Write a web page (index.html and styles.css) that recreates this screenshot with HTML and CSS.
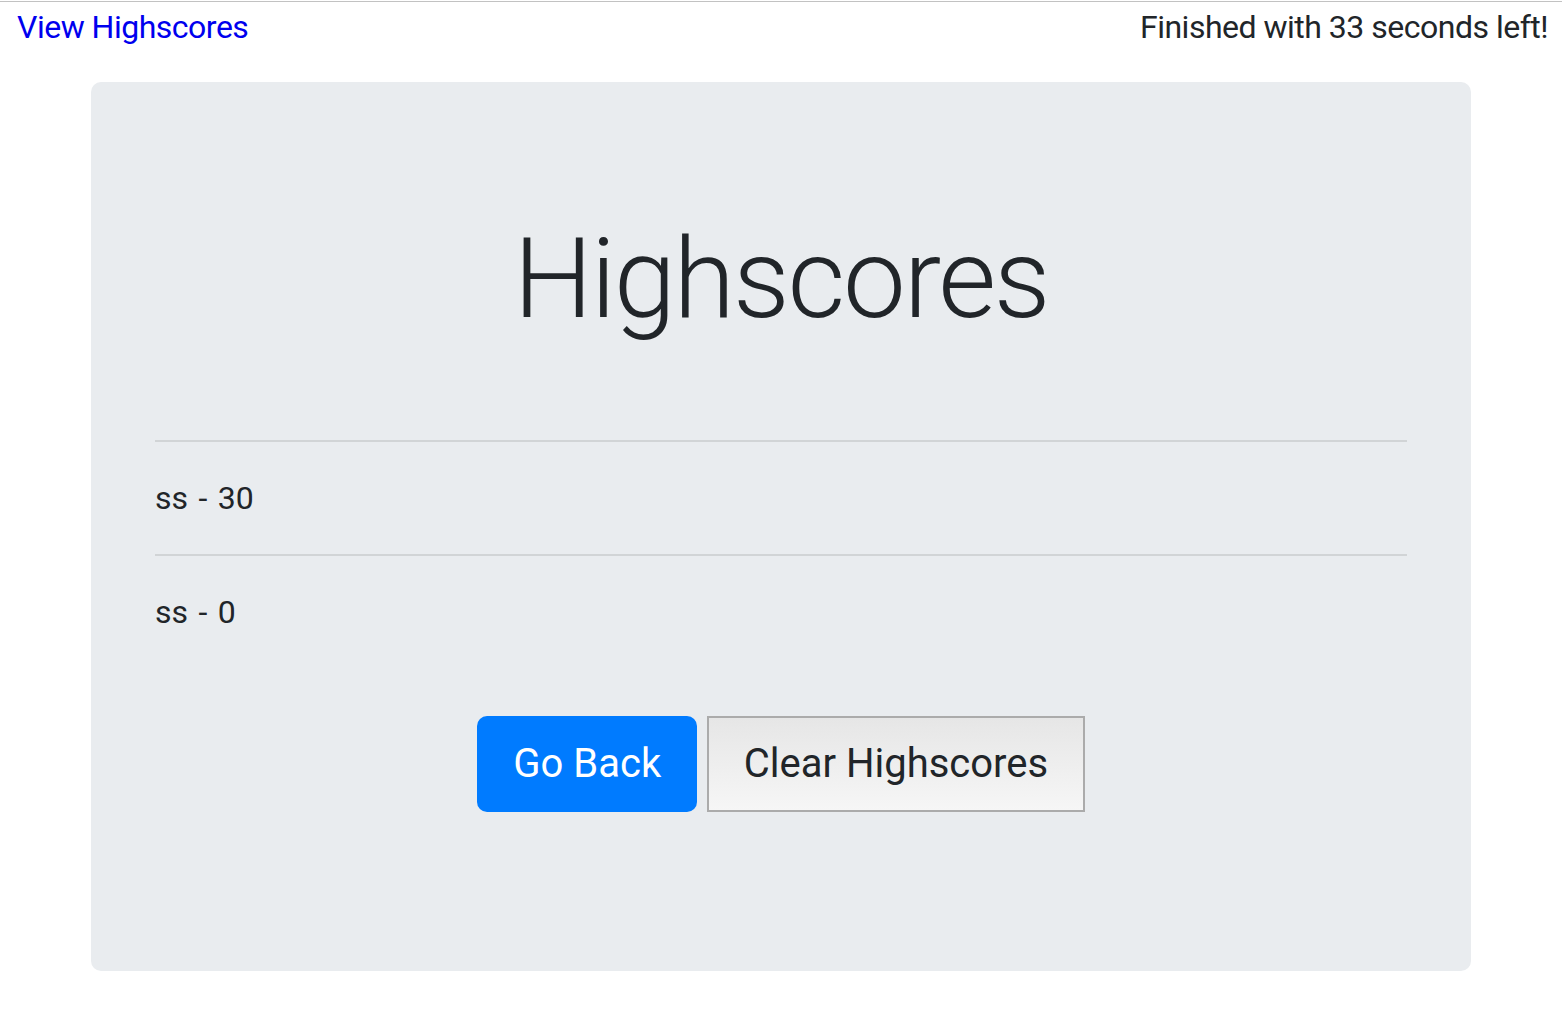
FILE: index.html
```html
<!DOCTYPE html>
<html lang="en">
<head>
<meta charset="utf-8">
<title>Highscores</title>
<link rel="stylesheet" href="styles.css">
</head>
<body>
  <header class="topbar">
    <a class="view-link" href="#">View Highscores</a>
    <span class="timer">Finished with 33 seconds left!</span>
  </header>
  <main class="jumbotron">
    <h1 class="title">Highscores</h1>
    <ul class="scores">
      <li class="score">ss - 30</li>
      <li class="score">ss - 0</li>
    </ul>
    <div class="actions">
      <button class="btn btn-primary">Go Back</button>
      <button class="btn btn-default">Clear Highscores</button>
    </div>
  </main>
</body>
</html>
```

FILE: styles.css
```css
html {
  padding-top: 1px;
  background: #fff;
}
body {
  margin: 0;
  border-top: 1px solid #c2c2c2;
  font-family: Roboto, "Liberation Sans", sans-serif;
  font-size: 32px;
  line-height: 48px;
  color: #212529;
}
.topbar {
  display: flex;
  justify-content: space-between;
  align-items: flex-start;
  padding: 1px 14px 0 17px;
  height: 47px;
  letter-spacing: -0.5px;
}
.view-link {
  color: #0000ee;
  text-decoration: none;
}
.jumbotron {
  box-sizing: border-box;
  width: 1380px;
  margin: 32px auto 0;
  padding: 128px 64px 128px;
  background: #e9ecef;
  border-radius: 10px;
}
.title {
  margin: 0;
  font-size: 112px;
  line-height: 134px;
  font-weight: 300;
  text-align: center;
  letter-spacing: -2.2px;
  padding-top: 2px;
}
.scores {
  list-style: none;
  margin: 94px 0 0;
  padding: 0;
}
.score {
  border-top: 2px solid rgba(0, 0, 0, 0.1);
  padding: 32px 0 0;
  margin-bottom: 32px;
  word-spacing: 2.5px;
}
.actions {
  display: flex;
  justify-content: center;
  gap: 10px;
  margin-top: 80px;
  margin-bottom: 31px;
}
.btn {
  box-sizing: border-box;
  height: 96px;
  font-family: inherit;
  font-size: 40px;
  line-height: 60px;
  color: #212529;
  cursor: pointer;
}
.btn-primary {
  padding: 0 36px;
  background: #007bff;
  color: #fff;
  border: none;
  border-radius: 10px;
}
.btn-default {
  padding: 0 34.5px;
  background: linear-gradient(#e6e6e6, #f6f6f6);
  border: 2px solid #ababab;
  border-radius: 0;
}
```
